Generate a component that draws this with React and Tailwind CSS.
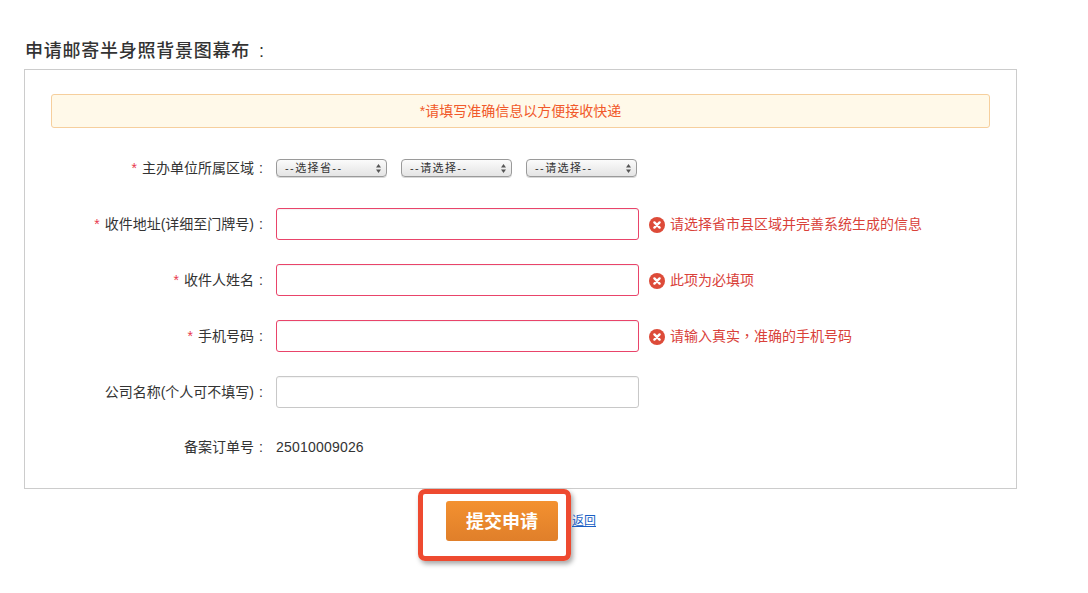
const font = "font-['Liberation_Sans','Noto_Sans_CJK_SC',sans-serif]";

function FakeSelect({ text }) {
  return (
    <div className="w-[111px] h-[18px] flex items-center justify-between pl-[8px] pr-[5px] rounded-[4px] border border-[#9a9a9a] bg-gradient-to-b from-[#fbfbfb] to-[#e4e4e4] text-[11px] tracking-[1.4px] text-[#333] shadow-[0_1px_0_#d8d8d8]">
      <span>{text}</span>
      <svg width="5" height="9" viewBox="0 0 5 9" fill="#555">
        <path d="M2.5 0L5 3.4H0z" />
        <path d="M2.5 9L0 5.6h5z" />
      </svg>
    </div>
  );
}

function ErrorMsg({ children }) {
  return (
    <div className="flex items-center gap-[5px] ml-[10px] text-[#d9413a] text-[14px]">
      <svg className="mt-[2px]" width="16" height="16" viewBox="0 0 16 16">
        <circle cx="8" cy="8" r="8" fill="#dd4b39" />
        <path d="M5.4 5.4l5.2 5.2M10.6 5.4l-5.2 5.2" stroke="#fff" strokeWidth="2.4" strokeLinecap="round" />
      </svg>
      <span>{children}</span>
    </div>
  );
}

function Label({ text, required }) {
  return (
    <div className="w-[225px] shrink-0 flex justify-end pr-[8px] text-[14px] text-[#333] whitespace-nowrap">
      {required && <span className="text-[#e8384f] mr-[5px]">*</span>}
      <span>{text}</span>
      <span className="w-[14px] text-center">:</span>
    </div>
  );
}

function InputRow({ label, error }) {
  return (
    <div className="flex items-center h-[32px] mb-[24px]">
      <Label text={label} required={!!error} />
      <input
        className={`w-[363px] h-[32px] rounded-[3px] border bg-white outline-none shadow-[inset_0_1px_1px_rgba(0,0,0,0.05)] ${error ? "border-[#e9446a]" : "border-[#c8c8c8]"}`}
      />
      {error && <ErrorMsg>{error}</ErrorMsg>}
    </div>
  );
}

export default function App() {
  return (
    <div className={`${font} w-[1088px] h-[593px] overflow-hidden bg-white pl-[24px] pt-[39px]`}>
      {/* 标题 */}
      <h2 className="flex h-[24px] leading-[24px] text-[18px] font-medium text-[#333] tracking-[0.75px] pl-[1px] mb-[6px]">
        <span>申请邮寄半身照背景图幕布</span>
        <span className="w-[24px] text-center">:</span>
      </h2>

      {/* 表单 */}
      <div className="w-[993px] h-[420px] border border-[#cccccc] px-[26px] pt-[24px]">
        <div className="w-[939px] h-[34px] flex items-center justify-center rounded-[3px] border border-[#f6cf9d] bg-[#fff9e9] text-[14px] text-[#f1592a] mb-[31px]">
          *请填写准确信息以方便接收快递
        </div>

        <div className="flex items-center h-[18px] mb-[31px]">
          <Label text="主办单位所属区域" required />
          <div className="flex gap-[14px]">
            <FakeSelect text="--选择省--" />
            <FakeSelect text="--请选择--" />
            <FakeSelect text="--请选择--" />
          </div>
        </div>

        <InputRow label="收件地址(详细至门牌号)" error="请选择省市县区域并完善系统生成的信息" />
        <InputRow label="收件人姓名" error="此项为必填项" />
        <InputRow
          label="手机号码"
          error={
            <>
              请输入真实<span className="font-['Noto_Sans_CJK_TC']">，</span>准确的手机号码
            </>
          }
        />
        <InputRow label="公司名称(个人可不填写)" />

        <div className="flex items-center h-[32px] -mt-[1px]">
          <Label text="备案订单号" />
          <span className="text-[14px] text-[#333] tracking-[0.2px]">25010009026</span>
        </div>
      </div>

      {/* 提交 */}
      <div className="flex items-center ml-[394px]">
        <div className="w-[153px] h-[72px] flex items-center pl-[23px] pb-[8px] rounded-[7px] border-[5px] border-[#ee4a30] shadow-[2px_3px_5px_rgba(0,0,0,0.35)]">
          <button className="w-[112px] h-[40px] pt-[2px] rounded-[3px] bg-gradient-to-b from-[#f39130] to-[#e07f2a] text-white text-[18px] font-bold">
            提交申请
          </button>
        </div>
        <a className="ml-[1px] mb-[9px] text-[12px] text-[#1a5fc4] underline">返回</a>
      </div>
    </div>
  );
}
